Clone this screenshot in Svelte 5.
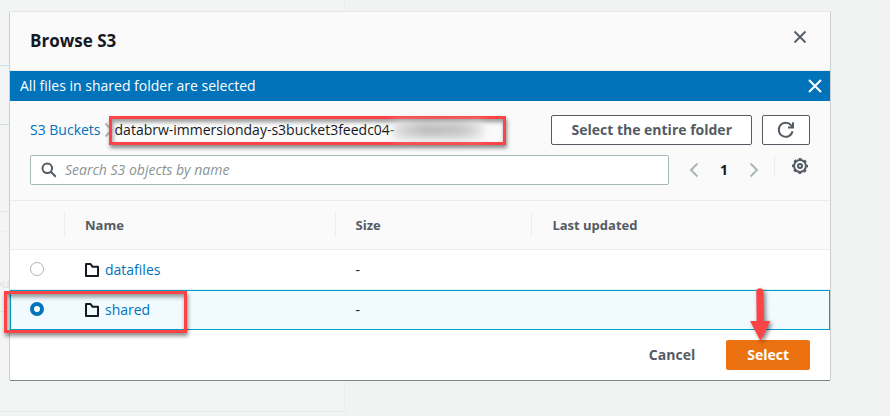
<script>
  let notice = $state(true);
  let query = $state('');
  let selected = $state('shared');
  const objects = [
    { name: 'datafiles', size: '-', updated: '' },
    { name: 'shared', size: '-', updated: '' }
  ];
</script>

<div class="page">
  <div class="backdrop" aria-hidden="true">
    <div class="line blue"></div>
    <div class="line blue"></div>
    <div class="line third"></div>
    <div class="line faint"></div>
    <div class="line word"><span>ou</span></div>
  </div>

  <div class="modal" role="dialog" aria-labelledby="title">
    <header>
      <h2 id="title">Browse S3</h2>
      <button class="icon" aria-label="Close">
        <svg width="14" height="14" viewBox="0 0 14 14"><path d="M1.5 1.5l11 11M12.5 1.5l-11 11" /></svg>
      </button>
    </header>

    {#if notice}
      <div class="notice" role="status">
        <span>All files in shared folder are selected</span>
        <button class="icon" aria-label="Dismiss" onclick={() => (notice = false)}>
          <svg width="14" height="14" viewBox="0 0 14 14"><path d="M1 1l12 12M13 1l-12 12" /></svg>
        </button>
      </div>
    {/if}

    <section class="tools">
      <div class="bar">
        <nav aria-label="Breadcrumb">
          <a href="#buckets">S3 Buckets</a>
          <svg class="sep" width="9" height="16" viewBox="0 0 9 16"><path d="M1.5 1.5L7.5 8l-6 6.5" /></svg>
          <span class="current">databrw-immersionday-s3bucket3feedc04-<span class="redacted"></span></span>
        </nav>
        <button class="btn">Select the entire folder</button>
        <button class="btn refresh" aria-label="Refresh">
          <svg width="18" height="18" viewBox="0 0 18 18"><path d="M15.6 10.2A7 7 0 1 1 14.2 4.4L16 6.2M16 1.2v5.3h-5" /></svg>
        </button>
      </div>
      <div class="bar search-bar">
        <label class="search">
          <svg width="16" height="16" viewBox="0 0 16 16"><circle cx="6.3" cy="6.3" r="4.8" /><path d="M9.8 9.8l5 5" /></svg>
          <input type="text" aria-label="Search S3 objects by name" placeholder="Search S3 objects by name" bind:value={query} />
        </label>
        <div class="pager">
          <button class="icon" aria-label="Previous page"><svg width="10" height="16" viewBox="0 0 10 16"><path d="M8.5 1.5L2 8l6.5 6.5" /></svg></button>
          <b>1</b>
          <button class="icon" aria-label="Next page"><svg width="10" height="16" viewBox="0 0 10 16"><path d="M1.5 1.5L8 8l-6.5 6.5" /></svg></button>
        </div>
        <button class="icon gear" aria-label="Preferences">
          <svg width="16" height="16" viewBox="0 0 16 16">
            <circle class="teeth" cx="8" cy="8" r="7.1" />
            <circle cx="8" cy="8" r="5.9" />
            <circle cx="8" cy="8" r="2" />
          </svg>
        </button>
      </div>
    </section>

    <table>
      <colgroup><col class="c-radio" /><col class="c-name" /><col class="c-size" /><col /></colgroup>
      <thead>
        <tr><td></td><th>Name</th><th>Size</th><th>Last updated</th></tr>
      </thead>
      <tbody>
        {#each objects as o}
          <tr class:selected={selected === o.name}>
            <td class="pick"><input type="radio" name="object" value={o.name} aria-label={o.name} bind:group={selected} /></td>
            <td>
              <a class="object" href={'#' + o.name}>
                <svg width="14" height="14" viewBox="0 0 14 14"><path d="M1 1h4.6l2 2.8H13V13H1z" /></svg>
                <span>{o.name}</span>
              </a>
            </td>
            <td>{o.size}</td>
            <td>{o.updated}</td>
          </tr>
        {/each}
      </tbody>
    </table>
    <div class="mark row-mark"></div>

    <footer>
      <button class="cancel">Cancel</button>
      <button class="primary">Select
        <svg class="arrow" width="32" height="60" viewBox="0 0 32 60">
          <path d="M12.3 7a3.6 3.6 0 0 1 7 0l.6 30h6.4L16.5 57 6 37h6.6z" />
        </svg>
      </button>
    </footer>
  </div>
</div>

<style>
  :global(body) {
    margin: 0;
    background: #f1f3f3;
  }
  .page {
    position: relative;
    min-height: 100vh;
    box-sizing: border-box;
    padding: 12px 60px 36px 10px;
    overflow: hidden;
    font: 14px/20px "Open Sans", "Noto Sans", sans-serif;
    color: #16191f;
  }
  .backdrop {
    position: absolute;
    inset: 0 auto 4px 0;
    width: 344px;
    background: #f3f4f4;
    border-right: 1px solid #eceeee;
    border-bottom: 1px solid #e6e9e9;
  }
  .line {
    height: 58px;
    border-bottom: 1px solid #e4e8e8;
  }
  .line.blue {
    border-color: #cfe0ec;
  }
  .line:first-child {
    height: 65px;
  }
  .line.third {
    height: 86px;
  }
  .line.faint {
    height: 19px;
    border-color: #eef0f0;
  }
  .line.word {
    height: 79px;
    display: flex;
    align-items: flex-end;
    font-size: 13px;
    color: #dfe2e2;
  }
  .line.word span {
    padding-bottom: 18px;
    margin-left: -6px;
  }
  .modal {
    position: relative;
    background: #fff;
    box-shadow: 1px 0 #c8cfcf, -1px 0 #c8cfcf, 0 -1px #e6e8e8, 0 1px #7b868c;
  }
  svg {
    display: block;
    fill: none;
    stroke: currentColor;
    stroke-width: 2;
  }
  button {
    font: inherit;
    font-weight: 700;
    color: #545b64;
    cursor: pointer;
  }
  a {
    color: #0073bb;
    text-decoration: none;
  }
  .icon {
    display: flex;
    padding: 0;
    border: 0;
    background: none;
  }
  header {
    display: flex;
    justify-content: space-between;
    align-items: center;
    height: 58px;
    padding: 0 23px 0 20px;
    background: #fafafa;
    border-bottom: 1px solid #eaeded;
  }
  header .icon {
    margin-bottom: 8px;
  }
  header svg {
    stroke-width: 1.8;
  }
  h2 {
    margin: 0;
    font-size: 17px;
    line-height: 24px;
    font-weight: 700;
  }
  .notice {
    display: flex;
    justify-content: space-between;
    align-items: center;
    height: 30px;
    padding: 0 8px 0 10px;
    background: #0073bb;
    color: #fff;
  }
  .notice .icon {
    color: #fff;
  }
  .tools {
    padding: 14px 20px 15px;
    background: #fafafa;
    border-bottom: 1px solid #eaeded;
  }
  .bar {
    display: flex;
    align-items: center;
    gap: 10px;
  }
  nav {
    display: flex;
    flex: 1;
    align-items: center;
    min-width: 0;
    white-space: nowrap;
  }
  .sep {
    margin: 0 -4px 0 3px;
    color: #aab7b8;
    flex: none;
  }
  .current,
  .mark {
    border: 3px solid #fc4447;
    box-shadow: 1px 3px 4px rgba(0, 0, 0, 0.45), inset 1px 3px 4px rgba(0, 0, 0, 0.4);
  }
  .current {
    display: flex;
    box-sizing: border-box;
    flex: 0 1 397px;
    height: 29px;
    line-height: 22px;
    padding-left: 3px;
  }
  .redacted {
    flex: 1;
    height: 16px;
    margin: 3px 20px 0 0;
    background: linear-gradient(90deg, #dedede, #bcbcbc 35%, #c4c4c4 75%, #e4e4e4);
    filter: blur(4px);
  }
  .btn {
    height: 30px;
    padding: 0 19px;
    border: 1px solid #545b64;
    border-radius: 2px;
    background: #fff;
    white-space: nowrap;
  }
  .refresh {
    padding: 0 14px;
  }
  .search-bar {
    margin-top: 10px;
    gap: 20px;
  }
  .search {
    display: flex;
    flex: 1;
    align-items: center;
    gap: 8px;
    height: 28px;
    padding: 0 10px;
    border: 1px solid #aab7b8;
    border-radius: 2px;
    background: #fff;
    color: #545b64;
  }
  .search input {
    flex: 1;
    min-width: 0;
    padding: 0;
    border: 0;
    outline: 0;
    background: none;
    font: inherit;
    color: #16191f;
  }
  .search input::placeholder {
    color: #879596;
    font-style: italic;
    opacity: 1;
  }
  .pager {
    display: flex;
    align-items: center;
    gap: 21px;
  }
  .pager .icon {
    color: #aab7b8;
  }
  .gear {
    align-self: flex-start;
    height: 22px;
    padding-left: 17px;
    margin: 0 2px 0 -5px;
    border-left: 1px solid #eaeded;
    align-items: center;
  }
  .gear .teeth {
    stroke-width: 1.8;
    stroke-dasharray: 2.8 2.777;
    stroke-dashoffset: 1.4;
  }
  table {
    width: 100%;
    table-layout: fixed;
    border-collapse: separate;
    border-spacing: 0;
  }
  .c-radio {
    width: 54px;
  }
  .c-name {
    width: 33%;
  }
  .c-size {
    width: 24%;
  }
  th,
  td {
    box-sizing: border-box;
    height: 40px;
    padding: 0 0 0 21px;
    text-align: left;
    vertical-align: middle;
    border-bottom: 1px solid #eaeded;
  }
  thead th,
  thead td {
    height: 49px;
    background: #fafafa;
    color: #545b64;
    font-size: 13px;
  }
  thead th {
    background: linear-gradient(#eaeded, #eaeded) 0 12px / 1px 24px no-repeat #fafafa;
  }
  .pick {
    padding-left: 20px;
  }
  .selected td {
    background: #f1faff;
    border-top: 1px solid #00a1c9;
    border-bottom-color: #00a1c9;
  }
  .selected td:first-child {
    border-left: 1px solid #00a1c9;
    padding-left: 19px;
  }
  .selected td:last-child {
    border-right: 1px solid #00a1c9;
  }
  input[type='radio'] {
    appearance: none;
    display: block;
    box-sizing: border-box;
    width: 14px;
    height: 14px;
    margin: 0 0 2px;
    border: 1px solid #aab7b8;
    border-radius: 50%;
    background: #fff;
  }
  input[type='radio']:checked {
    border: 4px solid #0073bb;
  }
  .object {
    display: flex;
    align-items: center;
    gap: 6px;
  }
  .object svg {
    color: #16191f;
    stroke-linejoin: round;
  }
  .row-mark {
    position: absolute;
    left: -6px;
    bottom: 47px;
    width: 177px;
    height: 36px;
    pointer-events: none;
  }
  footer {
    display: flex;
    justify-content: flex-end;
    align-items: center;
    gap: 10px;
    height: 50px;
    padding: 0 20px;
  }
  footer button {
    height: 30px;
    padding: 0 21px;
    border: 0;
    border-radius: 2px;
    background: none;
  }
  footer .primary {
    position: relative;
    background: #ec7211;
    color: #fff;
  }
  .arrow {
    position: absolute;
    left: 18px;
    top: -56px;
    fill: #fc4447;
    stroke: none;
    filter: drop-shadow(2px 2px 2px rgba(0, 0, 0, 0.5));
    pointer-events: none;
  }
</style>
